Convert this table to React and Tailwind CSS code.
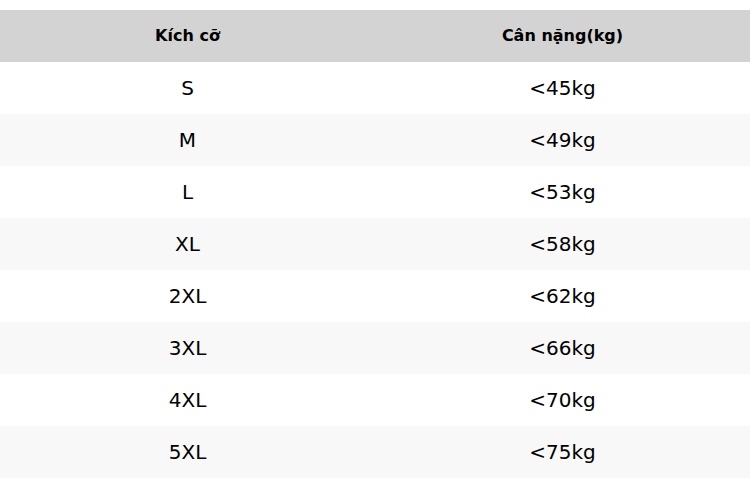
import React from "react";

const ROWS = [
  ["S", "<45kg"],
  ["M", "<49kg"],
  ["L", "<53kg"],
  ["XL", "<58kg"],
  ["2XL", "<62kg"],
  ["3XL", "<66kg"],
  ["4XL", "<70kg"],
  ["5XL", "<75kg"],
];

const App = () => {
  return (
    <div className="w-[750px] h-[478px] overflow-hidden bg-white pt-[10px] font-['DejaVu_Sans',sans-serif] text-black">
      <table className="w-full border-collapse table-fixed">
        <thead>
          <tr className="bg-[#d3d3d3] h-[52px]">
            <th className="text-[16px] font-bold">Kích cỡ</th>
            <th className="text-[16px] font-bold">Cân nặng(kg)</th>
          </tr>
        </thead>
        <tbody>
          {ROWS.map((row, i) => (
            <tr
              key={row[0]}
              className={`h-[52px] ${i % 2 === 1 ? "bg-[#f8f8f8]" : "bg-white"}`}
            >
              <td className="text-center text-[20px]">{row[0]}</td>
              <td className="text-center text-[20px]">{row[1]}</td>
            </tr>
          ))}
        </tbody>
      </table>
    </div>
  );
};

export default App;
